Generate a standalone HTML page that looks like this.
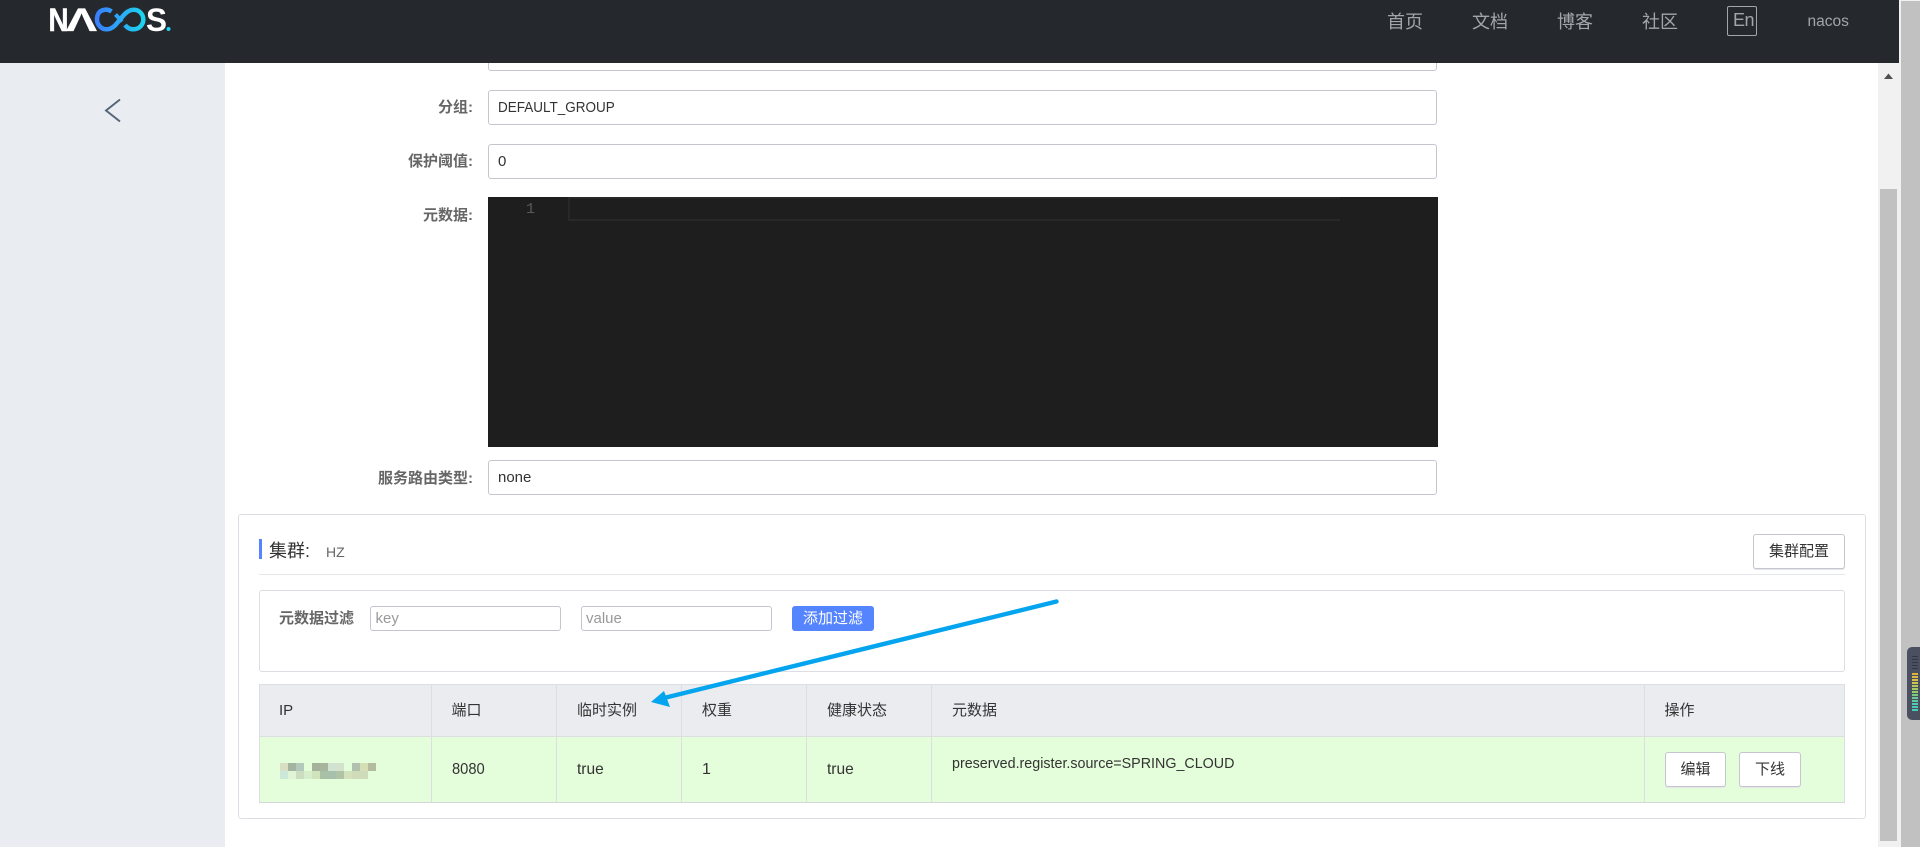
<!DOCTYPE html>
<html lang="zh"><head><meta charset="utf-8"><title>Nacos</title>
<style>
html,body{margin:0;padding:0;width:1920px;height:847px;overflow:hidden;background:#fff}
body{position:relative;font-family:"Liberation Sans","Noto Sans CJK SC",sans-serif;font-size:15px;color:#333}
.a{position:absolute;box-sizing:border-box}
.t{position:absolute;white-space:nowrap;line-height:20px;height:20px}
.nav{color:#a3a6a9;font-size:18px;line-height:24px;height:24px;top:10px}
.lab{right:1447px;color:#666;font-weight:700;text-align:right;font-size:15px}
.inp{position:absolute;left:488px;width:949px;height:35px;border:1px solid #c4c6cf;border-radius:3px;background:#fff;box-sizing:border-box}
.val{left:498px;font-size:15px;color:#333}
.sx{transform-origin:0 50%}
.btn{position:absolute;box-sizing:border-box;border:1px solid #c4c6cf;border-radius:3px;background:#fff;text-align:center;color:#333;font-size:15px;line-height:33px;height:35px;box-shadow:0 1px 0 #e6e6ea}
.vl{position:absolute;width:1px;top:685px;height:117px;background:#dcdee3}
</style></head><body>

<div class="a" style="left:0;top:63px;width:225px;height:784px;background:#e9ecf1"></div>
<svg class="a" style="left:100px;top:95px" width="26" height="32" viewBox="0 0 26 32"><path d="M20 4.500 6 15.500 20 26.500" fill="none" stroke="#546478" stroke-width="1.900"/></svg>

<!-- form -->
<div class="inp" style="top:30px;height:41px"></div>
<div class="t lab" style="top:98px">分组:</div>
<div class="inp" style="top:90px"></div>
<div class="t val sx" style="top:97.500px;transform:scaleX(.9)">DEFAULT_GROUP</div>
<div class="t lab" style="top:152px">保护阈值:</div>
<div class="inp" style="top:144px"></div>
<div class="t val" style="top:152px">0</div>
<div class="t lab" style="top:206px">元数据:</div>
<div class="a" style="left:488px;top:197px;width:950px;height:250px;background:#1e1e1e"></div>
<div class="a" style="left:568px;top:197px;width:772px;height:24px;border:2px solid #282828;border-right:0"></div>
<div class="t" style="left:526px;top:200px;color:#5a5a5a;font-family:'Liberation Mono',monospace;font-size:15px;width:9px">1</div>
<div class="t lab" style="top:469px">服务路由类型:</div>
<div class="inp" style="top:460px"></div>
<div class="t val" style="top:468px">none</div>

<!-- cluster card -->
<div class="a" style="left:238px;top:514px;width:1628px;height:305px;border:1px solid #dcdee3;border-radius:3px;background:#fff"></div>
<div class="a" style="left:259px;top:539px;width:3px;height:20px;background:#5584ff"></div>
<div class="t" style="left:269px;top:540px;font-size:18px;line-height:22px;height:22px;color:#333">集群:</div>
<div class="t" style="left:326px;top:542px;font-size:14px;color:#666">HZ</div>
<div class="btn" style="left:1753px;top:534px;width:92px">集群配置</div>
<div class="a" style="left:259px;top:574px;width:1586px;height:1px;background:#e6e7eb"></div>

<div class="a" style="left:259px;top:590px;width:1586px;height:82px;border:1px solid #dcdee3;border-radius:3px"></div>
<div class="t" style="left:279px;top:609px;color:#666;font-weight:700;font-size:15px">元数据过滤</div>
<div class="a" style="left:370px;top:606px;width:191px;height:25px;border:1px solid #c4c6cf;border-radius:3px"></div>
<div class="t" style="left:375.500px;top:609px;color:#999;font-size:15px">key</div>
<div class="a" style="left:581px;top:606px;width:191px;height:25px;border:1px solid #c4c6cf;border-radius:3px"></div>
<div class="t" style="left:586px;top:609px;color:#999;font-size:15px">value</div>
<div class="a" style="left:792px;top:606px;width:82px;height:25px;background:#5584ff;border-radius:3px;color:#fff;text-align:center;line-height:25px;font-size:15px">添加过滤</div>

<!-- table -->
<div class="a" style="left:259px;top:684px;width:1586px;height:119px;border:1px solid #dcdee3;border-bottom-color:#d4d6db;background:#e4fdda"></div>
<div class="a" style="left:260px;top:685px;width:1584px;height:52px;background:#ebecf0;border-bottom:1px solid #dcdee3"></div>
<div class="vl" style="left:431px"></div><div class="vl" style="left:556px"></div><div class="vl" style="left:681px"></div><div class="vl" style="left:806px"></div><div class="vl" style="left:931px"></div><div class="vl" style="left:1644px"></div>
<div class="t" style="left:279px;top:701px">IP</div>
<div class="t" style="left:451.500px;top:701px">端口</div>
<div class="t" style="left:577px;top:701px">临时实例</div>
<div class="t" style="left:702px;top:701px">权重</div>
<div class="t" style="left:827px;top:701px">健康状态</div>
<div class="t" style="left:952px;top:701px">元数据</div>
<div class="t" style="left:1664.500px;top:701px">操作</div>

<svg class="a" style="left:280px;top:763px" width="100" height="16" shape-rendering="crispEdges">
<rect x="0" width="8" height="8" fill="#d8dfc4"/><rect x="8" width="8" height="8" fill="#a3b5a0"/><rect x="16" width="8" height="8" fill="#b3c9bc"/><rect x="32" width="8" height="8" fill="#a6b19c"/><rect x="40" width="8" height="8" fill="#a8b59d"/><rect x="48" width="8" height="8" fill="#cfe3d0"/><rect x="56" width="8" height="8" fill="#d2e2cc"/><rect x="72" width="8" height="8" fill="#b0c2ad"/><rect x="80" width="8" height="8" fill="#d5deb5"/><rect x="88" width="8" height="8" fill="#b4bca0"/>
<rect x="0" y="8" width="8" height="8" fill="#cbe8d8"/><rect x="8" y="8" width="8" height="8" fill="#dff5d5"/><rect x="16" y="8" width="8" height="8" fill="#cbdcc0"/><rect x="24" y="8" width="8" height="8" fill="#d7eecc"/><rect x="32" y="8" width="8" height="8" fill="#d0e3bc"/><rect x="40" y="8" width="8" height="8" fill="#a9bfa6"/><rect x="48" y="8" width="8" height="8" fill="#a7c0ab"/><rect x="56" y="8" width="8" height="8" fill="#b1c3a7"/><rect x="64" y="8" width="8" height="8" fill="#d3e2bc"/><rect x="72" y="8" width="8" height="8" fill="#d0dcb7"/><rect x="80" y="8" width="8" height="8" fill="#cfdcbb"/>
</svg>
<div class="t sx" style="left:452px;top:760px;font-size:16px;transform:scaleX(.92)">8080</div>
<div class="t sx" style="left:577px;top:760px;font-size:16px;transform:scaleX(.97)">true</div>
<div class="t" style="left:702px;top:760px;font-size:16px">1</div>
<div class="t sx" style="left:827px;top:760px;font-size:16px;transform:scaleX(.97)">true</div>
<div class="t sx" style="left:952px;top:754px;font-size:15px;transform:scaleX(.953)">preserved.register.source=SPRING_CLOUD</div>
<div class="btn" style="left:1665px;top:752px;width:61px">编辑</div>
<div class="btn" style="left:1739px;top:752px;width:62px">下线</div>

<!-- annotation arrow -->
<svg class="a" style="left:640px;top:590px" width="430" height="125" viewBox="640 590 430 125">
<line x1="1056.500" y1="601.500" x2="664" y2="698" stroke="#04a5ee" stroke-width="4.400" stroke-linecap="round"/>
<path d="M651 702 664 691 670 707Z" fill="#04a5ee"/>
</svg>

<!-- scrollbars -->
<div class="a" style="left:1878px;top:63px;width:21px;height:784px;background:#f1f1f1"></div>
<div class="a" style="left:1880px;top:189px;width:17px;height:652px;background:#c1c1c1"></div>
<svg class="a" style="left:1883px;top:72px" width="11" height="8"><path d="M1 7 5.500 1.500 10 7Z" fill="#505050"/></svg>
<div class="a" style="left:1899px;top:0;width:21px;height:847px;background:#f1f1f1"></div>
<div class="a" style="left:1901px;top:1px;width:19px;height:846px;background:#c1c1c1"></div>

<!-- side widget -->
<div class="a" style="left:1907px;top:647px;width:13px;height:73px;background:#4a5060;border-radius:5px 0 0 5px"></div>
<svg class="a" style="left:1912px;top:655px" width="6" height="60" shape-rendering="crispEdges">
<g fill="#333847"><rect y="1" width="6" height="1"/><rect y="4" width="6" height="1"/><rect y="7" width="6" height="1"/><rect y="10" width="6" height="1"/><rect y="13" width="6" height="1"/></g>
<rect y="18" width="6" height="2" fill="#e0b040"/><rect y="21" width="6" height="2" fill="#dcb845"/><rect y="24" width="6" height="2" fill="#d8c048"/><rect y="27" width="6" height="2" fill="#c8c850"/><rect y="30" width="6" height="2" fill="#b8c858"/><rect y="33" width="6" height="2" fill="#a8cc60"/><rect y="36" width="6" height="2" fill="#90cc70"/><rect y="39" width="6" height="2" fill="#78cc80"/><rect y="42" width="6" height="2" fill="#68cc90"/><rect y="45" width="6" height="2" fill="#58cca0"/><rect y="48" width="6" height="2" fill="#50ccb0"/><rect y="51" width="6" height="2" fill="#48ccb8"/><rect y="54" width="6" height="2" fill="#48ccb8"/>
</svg>

<!-- header -->
<div class="a" style="left:0;top:0;width:1899px;height:63px;background:#25292e"></div>
<svg class="a" style="left:40px;top:0" width="140" height="40" viewBox="40 0 140 40">
<defs><linearGradient id="g" x1="95" x2="145" y1="0" y2="0" gradientUnits="userSpaceOnUse"><stop offset="0" stop-color="#3b7cff"/><stop offset="1" stop-color="#1cd6ee"/></linearGradient></defs>
<text x="48.500" y="31" font-family="Liberation Sans" font-weight="700" font-size="32" fill="#fff" stroke="#fff" stroke-width=".5" textLength="20" lengthAdjust="spacingAndGlyphs">N</text>
<text x="66" y="31" font-family="Liberation Sans" font-weight="700" font-size="32" fill="#fff" stroke="#fff" stroke-width=".3" textLength="31" lengthAdjust="spacingAndGlyphs">Λ</text>
<path d="M111.500 11.500C109 9.800 106 9.300 103.500 10 98.500 11 96.800 15.500 97 20 97.300 25.500 102 29.500 107 29.300 113.500 29 117 23 120 19.500 123 16 127 10 133.500 9.800 139.500 9.700 143.300 14.500 143.300 19.500 143.300 25 139 29.300 133.500 29.300 129.500 29.300 126.500 27 125 25" fill="none" stroke="url(#g)" stroke-width="4.500"/>
<path d="M115.500 14.500 122 21.500" fill="none" stroke="url(#g)" stroke-width="4"/>
<text x="146" y="31" font-family="Liberation Sans" font-weight="700" font-size="32" fill="#fff" textLength="21" lengthAdjust="spacingAndGlyphs">S</text>
<circle cx="168.500" cy="29" r="2" fill="#1cd6ee"/>
</svg>
<div class="t nav" style="left:1387px">首页</div>
<div class="t nav" style="left:1472px">文档</div>
<div class="t nav" style="left:1557px">博客</div>
<div class="t nav" style="left:1642px">社区</div>
<div class="a" style="left:1727px;top:6px;width:30px;height:30px;border:1px solid #a3a6a9;border-radius:2px"></div>
<div class="t nav" style="left:1733px;top:8px;font-size:18px;letter-spacing:-.5px">En</div>
<div class="t" style="left:1807.500px;top:12px;color:#a3a6a9;font-size:15.500px">nacos</div>
</body></html>
